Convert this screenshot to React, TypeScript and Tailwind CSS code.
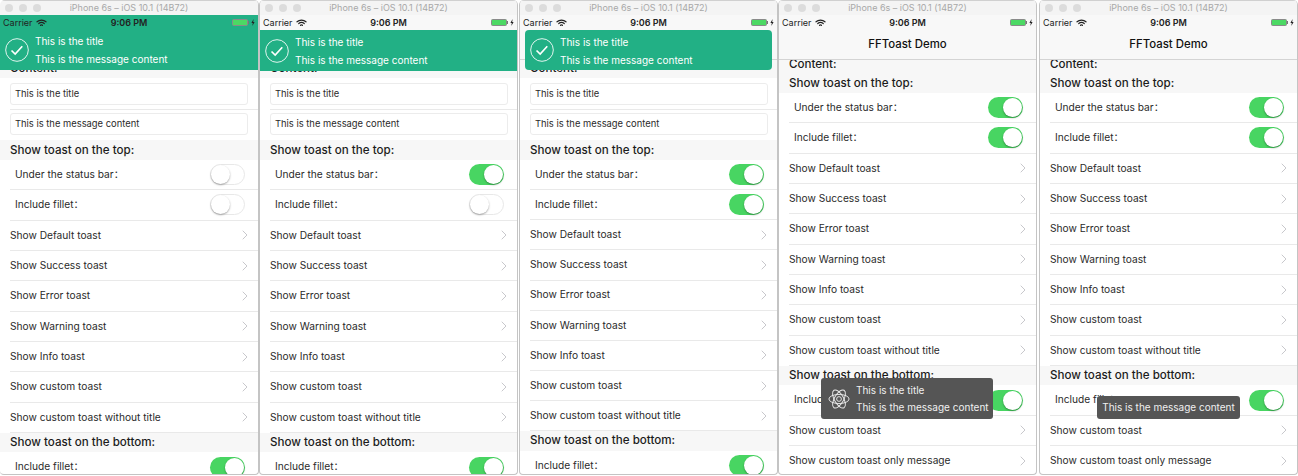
import { ChevronRight } from 'lucide-react';

type ToastKind = 'full' | 'under' | 'fillet' | 'custom' | 'message';

type PhoneProps = {
  width: string;
  kind: ToastKind;
  scrolled?: boolean;
  flush?: boolean;
  topOn: [boolean, boolean];
};

const topRows = [
  'Show Default toast',
  'Show Success toast',
  'Show Error toast',
  'Show Warning toast',
  'Show Info toast',
  'Show custom toast',
  'Show custom toast without title',
];

function Wifi() {
  return (
    <svg width="11" height="8" viewBox="0 0 22 16" fill="none" stroke="#222" strokeWidth="2.4" strokeLinecap="round">
      <path d="M2 5.5C7 1 15 1 20 5.5" />
      <path d="M5.5 9C8.5 6.5 13.5 6.5 16.5 9" />
      <path d="M9 12.5C10.2 11.5 11.8 11.5 13 12.5" />
    </svg>
  );
}

function Battery() {
  return (
    <div className="flex items-center gap-[2px]">
      <div className="flex items-center">
        <div className="w-[16px] h-[7px] rounded-[1.5px] bg-[#4cd964] border border-[#8a8a8a]" />
        <div className="w-[1px] h-[3px] bg-[#777]" />
      </div>
      <svg width="4" height="7" viewBox="0 0 4 7">
        <path d="M2.6 0L0.4 3.9H1.8L1.3 7L3.6 2.9H2.2Z" fill="#222" />
      </svg>
    </div>
  );
}

function Toggle({ on }: { on: boolean }) {
  return (
    <div
      className={
        on
          ? 'w-[35px] h-[21px] rounded-full bg-[#48d562] flex justify-end items-center px-[1px]'
          : 'w-[35px] h-[21px] rounded-full bg-white border border-[#e8e8e8] flex justify-start items-center'
      }
    >
      <div className="w-[19px] h-[19px] rounded-full bg-white shadow-[0_1px_2px_rgba(0,0,0,0.35)]" />
    </div>
  );
}

function SwitchRow({ label, on, rowH }: { label: string; on: boolean; rowH: string }) {
  return (
    <div className={`${rowH} ml-[10px] pl-[5px] pr-[13px] flex items-center justify-between border-b border-[#e9e9e9] text-[10.2px] text-[#2a2a2a]`}>
      <span>{label}：</span>
      <Toggle on={on} />
    </div>
  );
}

function LinkRow({ label, rowH }: { label: string; rowH: string }) {
  return (
    <div className={`${rowH} ml-[10px] pr-[5px] flex items-center justify-between border-b border-[#e9e9e9] text-[10.2px] text-[#2a2a2a]`}>
      <span>{label}</span>
      <ChevronRight size={16} strokeWidth={1.4} color="#c4c4c8" />
    </div>
  );
}

function SectionHead({ label, h }: { label: string; h: string }) {
  return (
    <div className={`${h} bg-[#f7f7f7] pl-[10px] flex items-center text-[11.6px] font-medium text-[#1c1c1c]`}>
      {label}
    </div>
  );
}

function Input({ text }: { text: string }) {
  return (
    <div className="h-[22px] w-[238px] ml-[10px] px-[4px] flex items-center rounded-[3px] border border-[#ececec] bg-white text-[9.4px] text-[#2a2a2a]">
      {text}
    </div>
  );
}

function CheckIcon() {
  return (
    <svg width="24" height="24" viewBox="0 0 25 25" fill="none" stroke="white">
      <circle cx="12.5" cy="12.5" r="11.8" strokeWidth="0.9" />
      <path d="M6.8 13L10.6 16.8L18 8.6" strokeWidth="1.7" />
    </svg>
  );
}

function AtomIcon() {
  return (
    <svg className="shrink-0" width="22" height="24" viewBox="0 0 24 26" fill="none" stroke="#eee" strokeWidth="1">
      <ellipse cx="12" cy="13" rx="11" ry="5" />
      <ellipse cx="12" cy="13" rx="11" ry="5" transform="rotate(60 12 13)" />
      <ellipse cx="12" cy="13" rx="11" ry="5" transform="rotate(120 12 13)" />
      <circle cx="12" cy="13" r="2.6" />
    </svg>
  );
}

function GreenToast({ kind }: { kind: ToastKind }) {
  const box =
    kind === 'full'
      ? 'top-[15px] left-0 right-0 h-[55px] pt-[14px]'
      : kind === 'under'
        ? 'top-[30px] left-0 right-0 h-[41px]'
        : 'top-[30px] left-[5px] right-[5px] h-[40px] rounded-[4px]';
  return (
    <div className={`absolute ${box} z-10 bg-[#22b085] flex items-center pl-[5px] gap-[6px] text-[10px] text-white`}>
      <div className="shrink-0">
        <CheckIcon />
      </div>
      <div className="flex flex-col gap-[4px] leading-[14px] pt-[1px]">
        <span>This is the title</span>
        <span>This is the message content</span>
      </div>
    </div>
  );
}

function Phone({ width, kind, scrolled, flush, topOn }: PhoneProps) {
  const rowH = kind === 'fillet' ? 'h-[30.15px]' : 'h-[30.33px]';
  const green = kind === 'full' || kind === 'under' || kind === 'fillet';

  return (
    <div className={`${width} ${flush ? 'border-l-0' : 'border-l'} h-[475px] relative overflow-hidden bg-white border-r border-b border-[#c4c4c4] rounded-t-[5px] rounded-b-[4px]`}>
      {/* window chrome */}
      <div className="h-[15px] bg-[#f4f4f4] border-t border-[#d0d0d0] flex items-center pl-[5px]">
        <div className="flex gap-[6px]">
          <div className="w-[8px] h-[8px] rounded-full bg-[#dcdcdc]" />
          <div className="w-[8px] h-[8px] rounded-full bg-[#dcdcdc]" />
          <div className="w-[8px] h-[8px] rounded-full bg-[#dcdcdc]" />
        </div>
        <div className="flex-1 text-center text-[9px] text-[#a8a8a8] pr-[41px]">iPhone 6s – iOS 10.1 (14B72)</div>
      </div>

      {/* status + nav */}
      <div className="h-[45px] bg-[#f8f8f8] border-b border-[#d4d4d4] relative">
        <div className="relative z-20 h-[15px] flex items-center justify-between px-[3px] text-[9px] text-[#222]">
          <div className="flex items-center gap-[3px]">
            <span>Carrier</span>
            <Wifi />
          </div>
          <span className="font-semibold absolute left-0 right-0 text-center">9:06 PM</span>
          <Battery />
        </div>
        <div className="h-[29px] pt-[1px] flex items-center justify-center text-[11.4px] font-medium text-[#111]">FFToast Demo</div>
      </div>

      {green && <GreenToast kind={kind} />}

      {scrolled ? (
        <SectionHead label="Content:" h="h-[13px] pb-[3px]" />
      ) : (
        <>
          <SectionHead label="Content:" h="h-[18px] pb-[1px]" />
          <div className="pt-[5px] pb-[5px]">
            <Input text="This is the title" />
            <div className="ml-[10px] my-[3px] h-[2px] border-b border-[#e9e9e9]" />
            <Input text="This is the message content" />
          </div>
        </>
      )}

      <SectionHead label="Show toast on the top:" h="h-[20px] pt-[1px]" />
      <SwitchRow label="Under the status bar" on={topOn[0]} rowH={rowH} />
      <SwitchRow label="Include fillet" on={topOn[1]} rowH={rowH} />
      {topRows.map((r) => (
        <LinkRow key={r} label={r} rowH={rowH} />
      ))}

      <SectionHead label="Show toast on the bottom:" h="h-[19.5px]" />
      <SwitchRow label="Include fillet" on rowH={rowH} />
      <LinkRow label="Show custom toast" rowH={rowH} />
      <LinkRow label="Show custom toast only message" rowH={rowH} />

      {kind === 'custom' && (
        <div className="absolute top-[378px] left-[42px] w-[172px] h-[41px] rounded-[3px] bg-[#555555] flex items-center pl-[7px] gap-[6px] text-[10px] text-[#f0f0f0]">
          <AtomIcon />
          <div className="flex flex-col gap-[3px] leading-[14px] whitespace-nowrap">
            <span>This is the title</span>
            <span>This is the message content</span>
          </div>
        </div>
      )}
      {kind === 'message' && (
        <div className="absolute top-[396px] left-[57px] w-[143px] h-[23px] rounded-[3px] bg-[#555555] flex items-center justify-center text-[10px] text-[#f0f0f0] whitespace-nowrap">
          This is the message content
        </div>
      )}
    </div>
  );
}

export default function App() {
  return (
    <div className="w-[1298px] h-[476px] overflow-hidden bg-white flex font-['Inter','Noto_Sans_CJK_SC',sans-serif]">
      <Phone width="w-[259px]" kind="full" flush topOn={[false, false]} />
      <Phone width="w-[259px]" kind="under" topOn={[true, false]} />
      <div className="ml-[1px]">
        <Phone width="w-[259px]" kind="fillet" topOn={[true, true]} />
      </div>
      <Phone width="w-[259px]" kind="custom" scrolled topOn={[true, true]} />
      <div className="ml-[2px]">
        <Phone width="w-[259px]" kind="message" scrolled topOn={[true, true]} />
      </div>
    </div>
  );
}
